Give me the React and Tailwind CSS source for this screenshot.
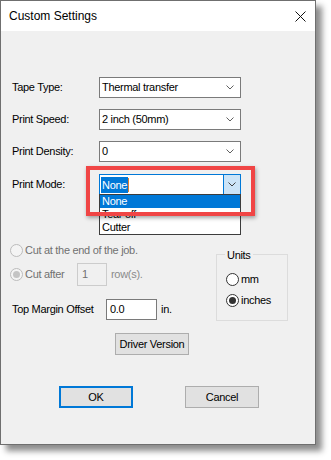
import { useState } from "react"

const font = { fontFamily: '"Liberation Sans", Arial, sans-serif' }

function Chevron({ color = "#606060" }) {
  return (
    <svg width="8" height="5" viewBox="0 0 8 5" className="block">
      <polyline points="0.5,0.5 4,4 7.5,0.5" fill="none" stroke={color} strokeWidth="1" />
    </svg>
  )
}

function Combo({ value }) {
  return (
    <div className="w-[142px] h-[21px] bg-white border border-[#7a7a7a] flex items-center justify-between pl-[2px] pr-[6px]">
      <span>{value}</span>
      <Chevron />
    </div>
  )
}

function Radio({ checked, disabled }) {
  return (
    <div
      className={
        "w-[13px] h-[13px] rounded-full border flex items-center justify-center shrink-0 " +
        (disabled ? "border-[#bcbcbc] bg-[#f4f4f4]" : "border-[#333333] bg-white")
      }
    >
      {checked && (
        <div className={"w-[7px] h-[7px] rounded-full " + (disabled ? "bg-[#c4c4c4]" : "bg-[#333333]")} />
      )}
    </div>
  )
}

function Button({ children, focused, className = "" }) {
  return (
    <div
      className={
        "w-[74px] h-[22px] bg-[#e1e1e1] flex items-center justify-center " +
        (focused ? "border-2 border-[#0078d7] " : "border border-[#adadad] ") +
        className
      }
    >
      {children}
    </div>
  )
}

export default function App() {
  const [units] = useState("inches")

  return (
    <div className="w-[331px] h-[460px] bg-white text-black text-[11px] tracking-[-0.3px]" style={font}>
      <div className="w-[316px] h-[445px] border border-[#6f6f6f] bg-[#f0f0f0] shadow-[6px_6px_6px_rgba(0,0,0,0.45)] flex flex-col">
        <div className="h-[30px] bg-white flex items-center justify-between pl-[8px] pr-[9px]">
          <span className="text-[12px] tracking-normal">Custom Settings</span>
          <svg width="11" height="11" viewBox="0 0 11 11">
            <path d="M0.5 0.5 L10.5 10.5 M10.5 0.5 L0.5 10.5" stroke="#111" strokeWidth="1" />
          </svg>
        </div>

        <div className="flex flex-col">
          <div className="px-[11px] flex flex-col">
            <div className="flex items-center mt-[46px]">
              <span className="w-[87px]">Tape Type:</span>
              <Combo value="Thermal transfer" />
            </div>
            <div className="flex items-center mt-[11px]">
              <span className="w-[87px]">Print Speed:</span>
              <Combo value="2 inch (50mm)" />
            </div>
            <div className="flex items-center mt-[11px]">
              <span className="w-[87px]">Print Density:</span>
              <Combo value="0" />
            </div>
            <div className="flex items-center mt-[12px]">
              <span className="w-[87px]">Print Mode:</span>
              <div className="relative">
                <div className="w-[142px] h-[21px] bg-white border border-[#0078d7] flex items-center justify-between pl-[1px]">
                  <div className="flex items-center">
                    <span className="bg-[#0078d7] text-white px-[1px] h-[16px] leading-[16px]">None</span>
                    <span className="w-[1px] h-[14px] bg-[#e08030]" />
                  </div>
                  <div className="w-[17px] h-[19px] bg-[#cce4f7] border-l border-[#0078d7] flex items-center justify-center">
                    <Chevron color="#404040" />
                  </div>
                </div>
                <div className="absolute left-0 top-[20px] w-[142px] bg-white border border-[#3c3c3c] flex flex-col z-10">
                  <span className="h-[13px] leading-[13px] bg-[#0078d7] text-white pl-[2px]">None</span>
                  <span className="h-[13px] leading-[13px] pl-[2px]">Tear off</span>
                  <span className="h-[13px] leading-[13px] pl-[2px]">Cutter</span>
                </div>
                <div className="absolute -left-[13px] -top-[8px] w-[169px] h-[50px] border-4 border-[#f04545] shadow-[1px_2px_4px_rgba(0,0,0,0.35)] z-20" />
              </div>
            </div>
          </div>

          <div className="flex pl-[9px] mt-[49px]">
            <div className="w-[206px] flex flex-col">
              <div className="flex items-center h-[13px] gap-[2px] text-[#707070]">
                <Radio disabled />
                <span>Cut at the end of the job.</span>
              </div>
              <div className="flex items-center h-[23px] mt-[6px] text-[#707070]">
                <Radio checked disabled />
                <span className="ml-[2px] w-[52px]">Cut after</span>
                <div className="w-[30px] h-[23px] border border-[#cccccc] bg-[#f0f0f0] pl-[4px] pt-[2px]">1</div>
                <span className="ml-[4px] text-[#8a8a8a]">row(s).</span>
              </div>
              <div className="flex items-center h-[21px] mt-[13px] ml-[2px]">
                <span className="w-[94px]">Top Margin Offset</span>
                <div className="w-[51px] h-[21px] border border-[#7a7a7a] bg-white flex items-center pl-[3px]">0.0</div>
                <span className="ml-[4px]">in.</span>
              </div>
            </div>

            <div className="relative w-[72px] h-[67px] mt-[10px] border border-[#dcdcdc] flex flex-col pl-[9px] pt-[18px]">
              <span className="absolute -top-[8px] left-[8px] bg-[#f0f0f0] px-[2px]">Units</span>
              <div className="flex items-center gap-[2px] h-[13px]">
                <Radio checked={units === "mm"} />
                <span>mm</span>
              </div>
              <div className="flex items-center gap-[2px] h-[13px] mt-[8px]">
                <Radio checked={units === "inches"} />
                <span>inches</span>
              </div>
            </div>
          </div>

          <Button className="ml-[114px] mt-[12px] h-[21px]">Driver Version</Button>

          <div className="flex mt-[31px] ml-[58px] gap-[52px]">
            <Button focused>OK</Button>
            <Button>Cancel</Button>
          </div>
        </div>
      </div>
    </div>
  )
}
